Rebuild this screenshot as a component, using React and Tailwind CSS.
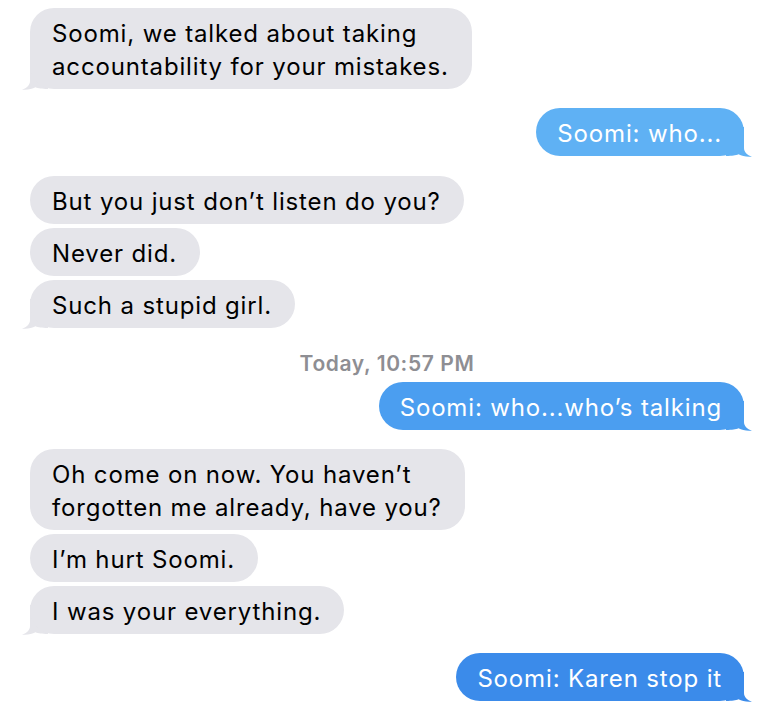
import React from "react";

function TailLeft({ color }) {
  return (
    <svg
      className="absolute left-[-8px] bottom-[-1px]"
      width="26"
      height="30"
      viewBox="0 0 26 30"
    >
      <path
        d="M8,0 L8,21 C8,25 5,28 0,29.6 C5,30.2 10,29.2 13.5,27.3 C16.5,28.6 19.5,29 26,29 L26,0 Z"
        fill={color}
      />
    </svg>
  );
}

function TailRight({ color }) {
  return (
    <svg
      className="absolute right-[-8px] bottom-[-1px]"
      width="26"
      height="30"
      viewBox="0 0 26 30"
    >
      <path
        d="M18,0 L18,21 C18,25 21,28 26,29.6 C21,30.2 16,29.2 12.5,27.3 C9.5,28.6 6.5,29 0,29 L0,0 Z"
        fill={color}
      />
    </svg>
  );
}

function Gray({ children, tail }) {
  return (
    <div className="self-start relative">
      {tail && <TailLeft color="#e5e5ea" />}
      <div className="relative bg-[#e5e5ea] rounded-[24px] pl-[22px] pr-[23px] pt-[9px] pb-[6px] text-black text-[24px] leading-[33px] tracking-[0.85px] whitespace-nowrap">
        {children}
      </div>
    </div>
  );
}

function Blue({ children, color, bg }) {
  return (
    <div className="self-end relative">
      <TailRight color={color} />
      <div className={`relative rounded-[24px] pl-[21px] pr-[22px] pt-[9px] pb-[6px] text-white text-[24px] leading-[33px] tracking-[0.85px] whitespace-nowrap ${bg}`}>
        {children}
      </div>
    </div>
  );
}

export default function App() {
  return (
    <div
      className="w-[772px] h-[718px] bg-white overflow-hidden flex flex-col pl-[30px] pr-[28px] pt-[8px]"
      style={{ fontFamily: "Inter, 'Noto Sans', sans-serif" }}
    >
      <Gray tail>
        Soomi, we talked about taking
        <br />
        accountability for your mistakes.
      </Gray>

      <div className="mt-[19px] flex flex-col">
        <Blue color="#5fb1f4" bg="bg-[#5fb1f4]">Soomi: who...</Blue>
      </div>

      <div className="mt-[20px] flex flex-col gap-[4px]">
        <Gray>But you just don’t listen do you?</Gray>
        <Gray>Never did.</Gray>
        <Gray tail>Such a stupid girl.</Gray>
      </div>

      <div className="mt-[24px] text-center text-[21px] leading-[24px] font-semibold tracking-[0.6px] text-[#8e8e93]">
        Today, 10:57 PM
      </div>

      <div className="mt-[6px] flex flex-col">
        <Blue color="#4b9ef0" bg="bg-[#4b9ef0]">Soomi: who...who’s talking</Blue>
      </div>

      <div className="mt-[19px] flex flex-col gap-[4px]">
        <Gray>
          Oh come on now. You haven’t
          <br />
          forgotten me already, have you?
        </Gray>
        <Gray>I’m hurt Soomi.</Gray>
        <Gray tail>I was your everything.</Gray>
      </div>

      <div className="mt-[19px] flex flex-col">
        <Blue color="#3b8bea" bg="bg-[#3b8bea]">Soomi: Karen stop it</Blue>
      </div>
    </div>
  );
}
